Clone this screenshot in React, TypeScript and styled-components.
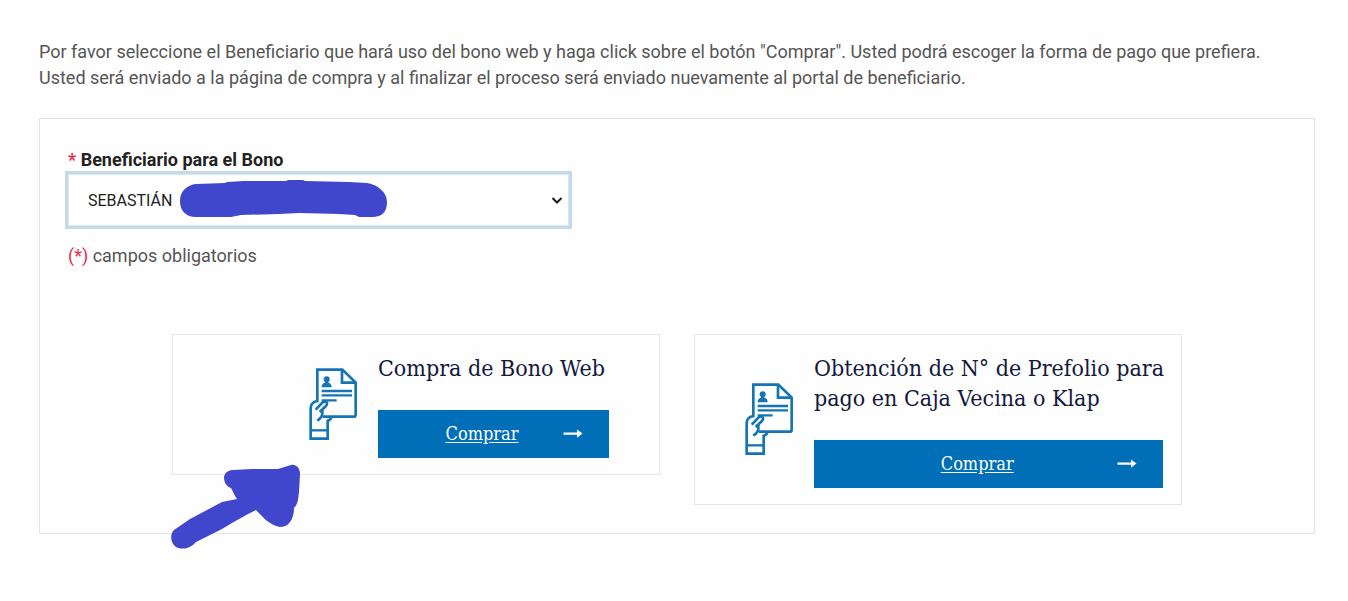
import React from "react";
import styled, { createGlobalStyle } from "styled-components";

const GlobalStyle = createGlobalStyle`
  *, *::before, *::after { box-sizing: border-box; }
  body {
    margin: 0;
    background: #fefefe;
    color: #555555;
    font-family: Roboto, "Liberation Sans", sans-serif;
    font-size: 18px;
    line-height: 26px;
  }
`;

const Page = styled.main`
  padding: 39px 33px 40px 39px;
`;

const Intro = styled.p`
  margin: 0 0 27px;
  padding-right: 28px;
`;

const Panel = styled.section`
  position: relative;
  padding: 28px;
  border: 1px solid #e4e4e6;
`;

const Field = styled.div`
  position: relative;
  max-width: 501px;
`;

const Label = styled.label`
  display: block;
  margin-bottom: 1px;
  color: #222222;
  font-weight: 700;
`;

const Required = styled.span`
  color: #e0304f;
`;

const SelectBox = styled.div`
  position: relative;
  margin-bottom: 17px;
`;

const Select = styled.select`
  display: block;
  width: 100%;
  height: 52px;
  padding: 0 19px;
  appearance: none;
  border: 1px solid #dde6ee;
  border-radius: 0;
  outline: 3px solid #c5dae8;
  background: #ffffff;
  color: #222222;
  font-family: inherit;
  font-size: 16px;
`;

const Chevron = styled.svg`
  position: absolute;
  top: 22px;
  right: 6px;
  pointer-events: none;
`;

const Redaction = styled.svg`
  position: absolute;
  top: 6px;
  left: 111px;
  pointer-events: none;
`;

const Note = styled.p`
  margin: 0;
`;

const Options = styled.div`
  display: grid;
  grid-template-columns: repeat(2, 1fr);
  align-items: start;
  gap: 34px;
  width: 83%;
  margin: 65px auto 0;
`;

const Card = styled.article<{ $end: number }>`
  display: flex;
  align-items: center;
  justify-content: flex-end;
  gap: 21px;
  padding: 18px ${({ $end }) => $end}px 16px 50px;
  border: 1px solid #e6e6e8;
`;

const CardBody = styled.div<{ $grow?: boolean }>`
  flex: ${({ $grow }) => ($grow ? "1 1 0" : "0 0 auto")};
  min-width: 231px;
`;

const Title = styled.h2`
  margin: 0 -8px 27px 0;
  color: #14193d;
  font-family: "Roboto Slab", "DejaVu Serif Condensed", "DejaVu Serif", serif;
  font-size: 23px;
  font-weight: 400;
  line-height: 30px;
`;

const BuyLink = styled.a`
  display: flex;
  align-items: center;
  height: 48px;
  padding: 0 26px 0 23px;
  background: #006fb7;
  color: #ffffff;
  font-family: "Roboto Slab", "DejaVu Serif Condensed", "DejaVu Serif", serif;
  font-size: 18px;
  text-decoration: none;
`;

const BuyText = styled.span`
  flex: 1;
  text-align: center;
  text-decoration: underline;
  text-underline-offset: 2px;
`;

const PointerArrow = styled.svg`
  position: absolute;
  left: 130px;
  bottom: -17px;
  pointer-events: none;
`;

const VoucherIcon = styled.svg`
  flex: none;
  margin-bottom: 3px;
`;

function Voucher() {
  return (
    <VoucherIcon width="48" height="72" viewBox="57 84 144 216" fill="none" stroke="#1475b5" strokeWidth="8" aria-hidden="true">
      <path d="M82 187V89H157L197 128V224Q197 230 191 230H99" />
      <path d="M156 88V128H197" />
      <circle cx="110" cy="118" r="9" fill="#1475b5" stroke="none" />
      <path d="M95 142Q95 130 105 128V122H115V128Q125 130 125 142Z" fill="#1475b5" stroke="none" />
      <path d="M95 153H186M95 166H186M95 181H140" strokeWidth="7" />
      <path d="M82 183Q62 187 62 205V296H113V242Q124 239 124 230" />
      <path d="M62 271H114" strokeWidth="7" />
      <path d="M77 209L98 187Q108 181 111 189Q112 194 107 199L89 216" />
      <path d="M97 210V221Q97 231 82 242" />
    </VoucherIcon>
  );
}

interface OptionProps {
  title: string;
  end: number;
  grow?: boolean;
}

function Option({ title, end, grow }: OptionProps) {
  return (
    <Card $end={end}>
      <Voucher />
      <CardBody $grow={grow}>
        <Title>{title}</Title>
        <BuyLink href="#comprar">
          <BuyText>Comprar</BuyText>
          <svg width="20" height="12" viewBox="0 0 20 12" aria-hidden="true">
            <path d="M0.5 4.4H14V1.4L19.5 5.6L14 9.8V6.8H0.5Z" fill="#ffffff" />
          </svg>
        </BuyLink>
      </CardBody>
    </Card>
  );
}

export default function App() {
  return (
    <>
      <GlobalStyle />
      <Page>
        <Intro>
          Por favor seleccione el Beneficiario que hará uso del bono web y haga click sobre el botón "Comprar". Usted
          podrá escoger la forma de pago que prefiera. Usted será enviado a la página de compra y al finalizar el
          proceso será enviado nuevamente al portal de beneficiario.
        </Intro>
        <Panel>
          <Field>
            <Label htmlFor="beneficiario">
              <Required>*</Required> Beneficiario para el Bono
            </Label>
            <SelectBox>
              <Select id="beneficiario" defaultValue="sebastian">
                <option value="sebastian">SEBASTIÁN</option>
              </Select>
              <Chevron width="12" height="9" viewBox="0 0 12 9" aria-hidden="true">
                <path d="M1.5 2L6 6.5L10.5 2" fill="none" stroke="#1c1c1c" strokeWidth="2" />
              </Chevron>
              <Redaction width="210" height="40" viewBox="0 0 210 40" aria-hidden="true">
                <path
                  d="M17 4L46 3L48 2L65 1H107L109 0H124L126 1L170 2L188 3C200 5 208 13 208 22C208 32 203 37 193 37H180L176 35L160 34L120 33L100 34L62 35L52 37H17C7 37 1 31 1 21C1 11 8 5 17 4Z"
                  fill="#4047cc"
                />
              </Redaction>
            </SelectBox>
          </Field>
          <Note>
            <Required>(*)</Required> campos obligatorios
          </Note>
          <Options>
            <Option title="Compra de Bono Web" end={50} />
            <Option title="Obtención de N° de Prefolio para pago en Caja Vecina o Klap" end={18} grow />
          </Options>
          <PointerArrow width="132" height="88" viewBox="0 0 132 88" aria-hidden="true">
            <path
              d="M63 8L82 7H108L121 3C126 2 130 6 130 12L129 30C128 38 128 42 124 46C124 54 121 65 110 65C99 63 93 55 86 48C74 54 63 60 52 67L26 80C20 87 12 88 6 85C0 81 0 72 4 68L20 57L52 40L67 37C64 33 63 29 61 26C56 24 54 20 54 15C55 10 59 8 63 8Z"
              fill="#4047cc"
            />
          </PointerArrow>
        </Panel>
      </Page>
    </>
  );
}
